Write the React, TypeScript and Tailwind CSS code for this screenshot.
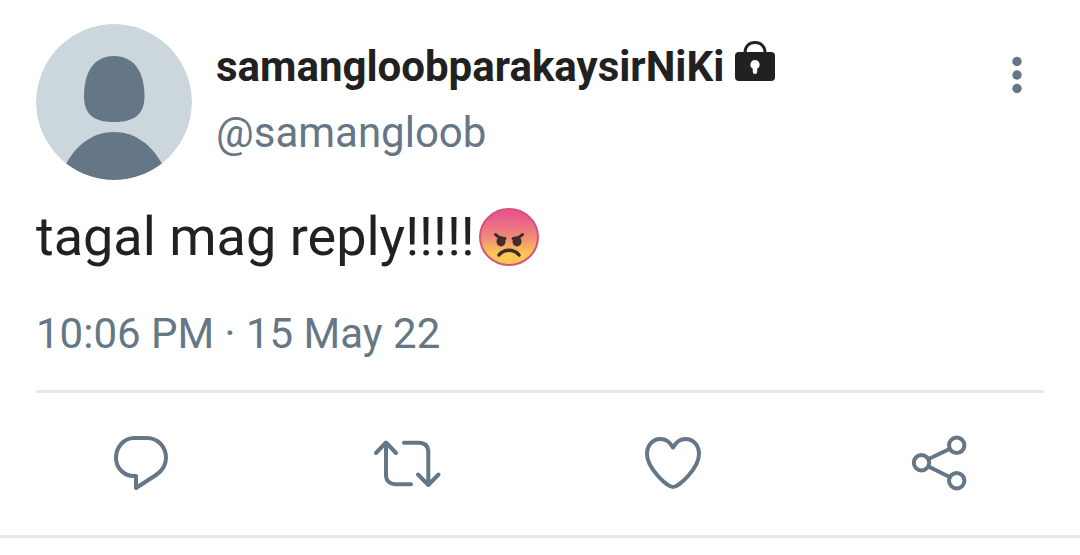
import type { ReactNode } from 'react';

interface Tweet {
  name: string;
  handle: string;
  text: string;
  time: string;
  date: string;
}

const tweet: Tweet = {
  name: 'samangloobparakaysirNiKi',
  handle: '@samangloob',
  text: 'tagal mag reply!!!!!',
  time: '10:06 PM',
  date: '15 May 22',
};

function Avatar() {
  return (
    <svg viewBox="0 0 156 156" className="size-39 shrink-0 rounded-full" role="img" aria-label="Profile picture">
      <circle cx="78" cy="78" r="78" fill="#ccd6dd" />
      <path
        d="M78 32C98 32 108.500 48 108.500 72C108.500 90 99 98 78 98C57 98 48 90 48 72C48 48 58 32 78 32Z"
        fill="#657786"
      />
      <path d="M30 140C40 121 57 108 78 108C99 108 116 121 126 140C113 150 96 156 78 156C60 156 43 150 30 140Z" fill="#657786" />
    </svg>
  );
}

function LockIcon() {
  return (
    <svg viewBox="0 0 40 40" className="size-10 shrink-0" role="img" aria-label="Protected account">
      <path d="M10 13V11.500C10 5.500 14 1.500 20 1.500C26 1.500 30 5.500 30 11.500V13" fill="none" stroke="#212121" strokeWidth="3" />
      <rect x="0" y="11" width="40" height="29" rx="4" fill="#212121" />
      <path d="M20 19a4.700 4.700 0 0 1 2.200 8.800v3a2.200 2.200 0 0 1-4.400 0v-3a4.700 4.700 0 0 1 2.200-8.800Z" fill="#fff" />
    </svg>
  );
}

function AngryFace() {
  return (
    <svg viewBox="0 0 62 60" className="h-15 w-15.5 shrink-0" role="img" aria-label="Angry face">
      <defs>
        <linearGradient id="angry" x1="0" y1="0" x2="0" y2="1">
          <stop offset="0.1" stopColor="#e8588e" />
          <stop offset="0.5" stopColor="#f0897a" />
          <stop offset="0.8" stopColor="#fcc653" />
          <stop offset="1" stopColor="#fcc850" />
        </linearGradient>
      </defs>
      <ellipse cx="31" cy="30" rx="29" ry="28" fill="url(#angry)" stroke="#d9527a" strokeWidth="2" />
      <g fill="none" stroke="#422b2b" strokeLinecap="round">
        <path d="M17.500 27.500C20 30 23 31.500 27 31.500M44.500 27.500C42 30 39 31.500 35 31.500" strokeWidth="3" />
        <path d="M21 48C26 41.500 36 41.500 41 48" strokeWidth="3.500" />
      </g>
      <ellipse cx="23" cy="34.500" rx="4.500" ry="5" fill="#422b2b" />
      <ellipse cx="39" cy="34.500" rx="4.500" ry="5" fill="#422b2b" />
    </svg>
  );
}

function ActionButton({ label, children }: { label: string; children: ReactNode }) {
  return (
    <button type="button" aria-label={label} className="flex justify-center">
      <svg
        viewBox="0 0 72 72"
        className="size-18"
        fill="none"
        stroke="#657786"
        strokeWidth="4"
        strokeLinecap="round"
        strokeLinejoin="round"
      >
        {children}
      </svg>
    </button>
  );
}

export default function App() {
  return (
    <main className="bg-white font-[Roboto,sans-serif] text-[#212121]">
      <article className="border-b-3 border-[#e8e8e8]">
        <div className="px-9 pt-6">
          <header className="flex items-start gap-6">
            <Avatar />
            <div className="min-w-0 flex-1 pt-[13px]">
              <div className="flex items-start gap-[11px]">
                <h1 className="text-[42px] leading-[60px] font-bold">{tweet.name}</h1>
                <span className="pt-1">
                  <LockIcon />
                </span>
              </div>
              <p className="text-[42px] leading-[72px] text-[#657786]">{tweet.handle}</p>
            </div>
            <button type="button" aria-label="More options" className="pt-8 pr-5">
              <svg viewBox="0 0 14 38" className="h-9.5 w-3.5" fill="#657786">
                <circle cx="7" cy="5.500" r="4.700" />
                <circle cx="7" cy="19" r="4.700" />
                <circle cx="7" cy="32.500" r="4.700" />
              </svg>
            </button>
          </header>

          <p className="mt-[21px] flex items-center gap-[3px] text-[54px] leading-[72px]">
            {tweet.text}
            <AngryFace />
          </p>

          <p className="mt-[31px] border-b-3 border-[#e8e8e8] pb-[26px] text-[42px] leading-[60px] text-[#657786]">
            <time>
              {tweet.time} · {tweet.date}
            </time>
          </p>
        </div>

        <div className="grid grid-cols-4 px-2 pt-8.5 pb-9">
          <ActionButton label="Reply">
            <path d="M29 11H42C53 11 61 20 61 31C61 38 57 44 51 48L31 61V49H29C19 49 11 41 11 31C11 20 19 11 29 11Z" />
          </ActionButton>
          <ActionButton label="Retweet">
            <path d="M5 26L15 15.500L25 26M15 16V48C15 54 19 57 24 57.300H40" />
            <path d="M33 15.700H48C54 16 57.300 19 57.300 25V58M47 47.500L57.300 58L67.500 47.500" />
          </ActionButton>
          <ActionButton label="Like">
            <path d="M36 20.500C33 15 29 12 23.500 12C15 12 10 19 10 27C10 41 30 60 36 60C42 60 62 41 62 27C62 19 57 12 48.500 12C43 12 39 15 36 20.500Z" />
          </ActionButton>
          <ActionButton label="Share">
            <circle cx="18.500" cy="35.700" r="7.700" />
            <circle cx="53.700" cy="18.300" r="7.700" />
            <circle cx="53.700" cy="53.700" r="7.700" />
            <path d="M25.500 32L46.500 22M25.500 39.500L46.500 50" />
          </ActionButton>
        </div>
      </article>
    </main>
  );
}
